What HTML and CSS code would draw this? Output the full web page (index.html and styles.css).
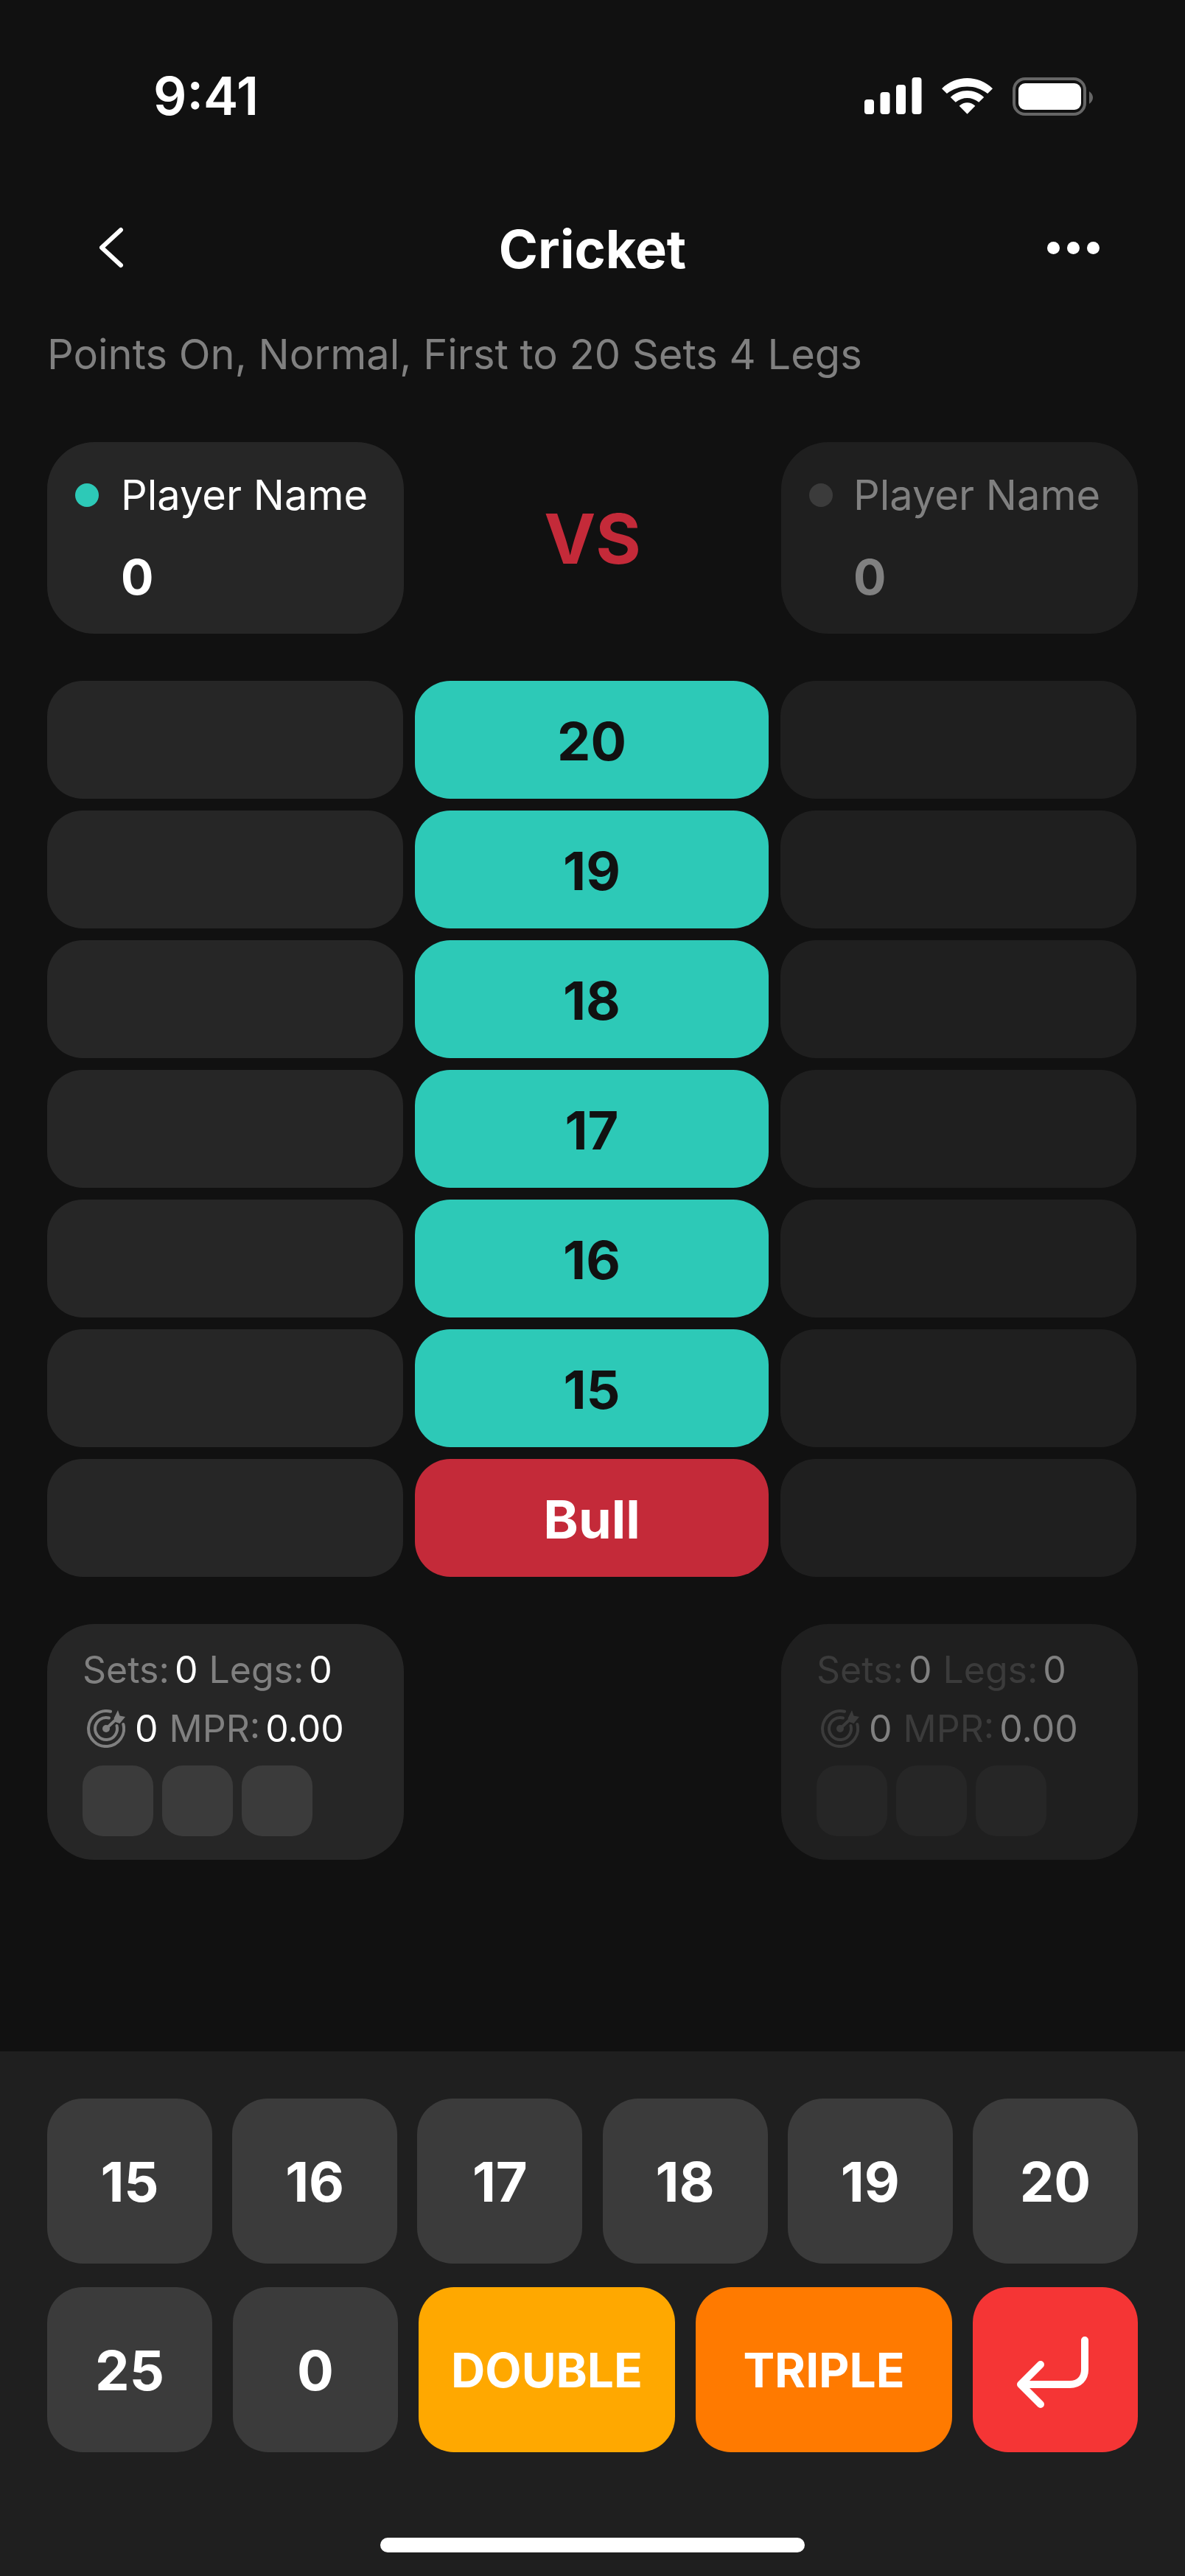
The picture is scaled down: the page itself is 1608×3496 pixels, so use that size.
FILE: index.html
```html
<!DOCTYPE html>
<html lang="en">
<head>
    <meta charset="UTF-8">
    <meta name="viewport" content="width=device-width, initial-scale=1.0">
    <title>Cricket</title>
    <link rel="stylesheet" href="styles.css">
</head>
<body>
    <div class="screen">
        <div class="status-bar">
            <span class="time">9:41</span>
            <div class="status-icons">
                <svg width="78" height="50" viewBox="0 0 78 50"><rect x="0" y="30" width="13" height="20" rx="4"/><rect x="21.5" y="20" width="13" height="30" rx="4"/><rect x="43" y="10" width="13" height="40" rx="4"/><rect x="64.5" y="0" width="13" height="50" rx="4"/></svg>
                <svg width="69" height="50" viewBox="0 0 70 50"><path d="M0 15 C20 -4 50 -4 70 15 L63 22 C47 9 23 9 7 22Z"/><path d="M12 27 C25 15 45 15 58 27 L51 34 C41 26 29 26 19 34Z"/><path d="M24 39 C31 33 39 33 46 39 L35 50Z"/></svg>
                <svg width="109" height="52" viewBox="0 0 109 52"><rect x="2" y="2" width="96" height="48" rx="15" fill="none" stroke="#666" stroke-width="4"/><rect x="8" y="8" width="85" height="36" rx="9"/><path d="M104 19 C107 21 109 24 109 27.5 C109 31 107 34 104 36Z" fill="#666"/></svg>
            </div>
        </div>

        <div class="nav">
            <svg class="back" width="36" height="56" viewBox="0 0 36 56"><path d="M32 4 L6 28 L32 52" fill="none" stroke="#fff" stroke-width="6" stroke-linecap="round" stroke-linejoin="round"/></svg>
            <h1>Cricket</h1>
            <div class="more"><span></span><span></span><span></span></div>
        </div>
        <p class="subtitle">Points On, Normal, First to 20 Sets 4 Legs</p>

        <div class="players">
            <div class="player">
                <div class="player-name"><span class="dot"></span>Player Name</div>
                <div class="player-score">0</div>
            </div>
            <div class="vs">VS</div>
            <div class="player inactive">
                <div class="player-name"><span class="dot"></span>Player Name</div>
                <div class="player-score">0</div>
            </div>
        </div>

        <div class="board">
            <div class="cell"></div><div class="target">20</div><div class="cell dim"></div>
            <div class="cell"></div><div class="target">19</div><div class="cell dim"></div>
            <div class="cell"></div><div class="target">18</div><div class="cell dim"></div>
            <div class="cell"></div><div class="target">17</div><div class="cell dim"></div>
            <div class="cell"></div><div class="target">16</div><div class="cell dim"></div>
            <div class="cell"></div><div class="target">15</div><div class="cell dim"></div>
            <div class="cell"></div><div class="target bull">Bull</div><div class="cell dim"></div>
        </div>

        <div class="stats-row">
            <div class="stats">
                <div class="stat-line"><span class="label">Sets:</span><span>0</span><span class="label">Legs:</span><span>0</span></div>
                <div class="stat-line">
                    <svg class="dart" width="52" height="52" viewBox="0 0 52 52"><g fill="none" stroke="currentColor" stroke-width="4" stroke-linecap="round"><path d="M32 2.8 A24 24 0 1 0 49.3 20"/><path d="M30 11.5 A15 15 0 1 0 40.5 22"/><path d="M26 26 L40 13"/></g><circle cx="26" cy="26" r="5" fill="currentColor"/><path d="M36.5 12 L42 1 L44.5 8.5 L52 10 L44.5 19 L38.5 17Z" fill="currentColor"/></svg>
                    <span>0</span><span class="label">MPR:</span><span>0.00</span>
                </div>
                <div class="throws"><div></div><div></div><div></div></div>
            </div>
            <div class="stats inactive">
                <div class="stat-line"><span class="label">Sets:</span><span>0</span><span class="label">Legs:</span><span>0</span></div>
                <div class="stat-line">
                    <svg class="dart" width="52" height="52" viewBox="0 0 52 52"><g fill="none" stroke="currentColor" stroke-width="4" stroke-linecap="round"><path d="M32 2.8 A24 24 0 1 0 49.3 20"/><path d="M30 11.5 A15 15 0 1 0 40.5 22"/><path d="M26 26 L40 13"/></g><circle cx="26" cy="26" r="5" fill="currentColor"/><path d="M36.5 12 L42 1 L44.5 8.5 L52 10 L44.5 19 L38.5 17Z" fill="currentColor"/></svg>
                    <span>0</span><span class="label">MPR:</span><span>0.00</span>
                </div>
                <div class="throws"><div></div><div></div><div></div></div>
            </div>
        </div>

        <div class="keypad">
            <div class="keys">
                <div class="key">15</div><div class="key">16</div><div class="key">17</div>
                <div class="key">18</div><div class="key">19</div><div class="key">20</div>
            </div>
            <div class="keys">
                <div class="key">25</div><div class="key">0</div>
                <div class="key wide double">DOUBLE</div>
                <div class="key wide triple">TRIPLE</div>
                <div class="key enter">
                    <svg width="224" height="224" viewBox="0 0 224 224"><path d="M152 72 V112 C152 124 144 132 132 132 H65 M92 105 L65 132 L92 159" fill="none" stroke="#fff" stroke-width="10" stroke-linecap="round" stroke-linejoin="round"/></svg>
                </div>
            </div>
            <div class="home-bar"></div>
        </div>
    </div>
</body>
</html>
```

FILE: styles.css
```css
* {
    box-sizing: border-box;
}
body {
    margin: 0;
    background-color: #111111;
    font-family: Inter, "Liberation Sans", sans-serif;
    color: #fff;
}
.screen {
    width: 1608px;
    height: 3496px;
    display: flex;
    flex-direction: column;
    overflow: hidden;
}

/* status bar */
.status-bar {
    height: 260px;
    flex: none;
    padding: 92px 125px 0 208px;
    display: flex;
    justify-content: space-between;
    align-items: flex-start;
}
.time {
    font-size: 71px;
    line-height: 76px;
    font-weight: 600;
}
.status-icons {
    display: flex;
    align-items: flex-start;
    gap: 27px;
    padding-top: 13px;
    fill: #fff;
}

/* header */
.nav {
    height: 155px;
    flex: none;
    padding: 0 116px 0 132px;
    display: flex;
    align-items: flex-start;
    justify-content: space-between;
    position: relative;
}
.back {
    margin-top: 48px;
}
.nav h1 {
    position: absolute;
    left: 0;
    right: 0;
    top: 36px;
    margin: 0;
    text-align: center;
    font-size: 72px;
    line-height: 84px;
    font-weight: 700;
}
.more {
    display: flex;
    gap: 10px;
    margin-top: 68px;
}
.more span {
    width: 17px;
    height: 17px;
    border-radius: 50%;
    background-color: #fff;
}
.subtitle {
    margin: 0;
    padding: 33px 0 0 64px;
    height: 185px;
    font-size: 56px;
    line-height: 66px;
    color: #808080;
    flex: none;
}

/* players */
.players {
    display: grid;
    grid-template-columns: 484px 1fr 484px;
    padding: 0 64px;
    flex: none;
}
.player {
    height: 260px;
    background-color: #262626;
    border-radius: 64px;
    padding: 40px 0 0 38px;
}
.player-name {
    display: flex;
    align-items: center;
    font-size: 56px;
    line-height: 64px;
    color: #fff;
}
.dot {
    width: 32px;
    height: 32px;
    border-radius: 50%;
    margin-right: 30px;
    background-color: #2dc9b7;
}
.player-score {
    padding-left: 62px;
    margin-top: 47px;
    font-size: 66px;
    line-height: 64px;
    font-weight: 700;
}
.player.inactive {
    background-color: #1f1f1f;
}
.player.inactive .player-name,
.player.inactive .player-score {
    color: #808080;
}
.player.inactive .dot {
    background-color: #3b3b3b;
    margin-right: 28px;
}
.player.inactive .player-score {
    padding-left: 60px;
}
.vs {
    text-align: center;
    align-self: center;
    padding-top: 2px;
    font-size: 94px;
    line-height: 120px;
    font-weight: 700;
    color: #c42a39;
}

/* scoreboard */
.board {
    display: grid;
    grid-template-columns: 483px 480px 483px;
    grid-auto-rows: 160px;
    gap: 16px;
    padding: 64px 64px 0;
    flex: none;
}
.cell {
    background-color: #262626;
    border-radius: 48px;
}
.cell.dim {
    background-color: #1f1f1f;
}
.target {
    display: flex;
    align-items: center;
    justify-content: center;
    padding-top: 2px;
    background-color: #2dc9b7;
    border-radius: 48px;
    font-size: 72px;
    font-weight: 700;
    color: #111111;
}
.target.bull {
    background-color: #c42a39;
    color: #fff;
}

/* stats */
.stats-row {
    display: flex;
    justify-content: space-between;
    padding: 64px 64px 0;
    flex: none;
}
.stats {
    width: 484px;
    height: 320px;
    background-color: #262626;
    border-radius: 64px;
    padding: 22px 48px 0;
    font-size: 50px;
}
.stat-line {
    height: 80px;
    display: flex;
    align-items: center;
    gap: 15px;
    color: #fff;
}
.label {
    color: #808080;
    margin-right: -8px;
}
.dart {
    color: #808080;
    margin: 0 -2px 0 6px;
}
.throws {
    display: flex;
    gap: 12px;
    margin-top: 10px;
}
.throws div {
    width: 96px;
    height: 96px;
    border-radius: 28px;
    background-color: #3b3b3b;
}
.stats.inactive {
    background-color: #1f1f1f;
}
.stats.inactive .stat-line {
    color: #808080;
}
.stats.inactive .label,
.stats.inactive .dart {
    color: #3b3b3b;
}
.stats.inactive .throws div {
    background-color: #262626;
}

/* keypad */
.keypad {
    margin-top: auto;
    height: 712px;
    flex: none;
    background-color: #1f1f1f;
    padding: 64px 64px 0;
    display: flex;
    flex-direction: column;
    gap: 32px;
}
.keys {
    display: flex;
    justify-content: space-between;
}
.key {
    flex: 0 0 224px;
    height: 224px;
    display: flex;
    align-items: center;
    justify-content: center;
    padding-top: 2px;
    background-color: #3b3b3b;
    border-radius: 48px;
    font-size: 74px;
    font-weight: 700;
}
.key.wide {
    flex-basis: 348px;
    padding-top: 0;
    font-size: 64px;
}
.key.double {
    background-color: #ffa800;
}
.key.triple {
    background-color: #ff7a00;
}
.key.enter {
    padding-top: 0;
    background-color: #f53535;
}
.home-bar {
    width: 576px;
    height: 20px;
    border-radius: 10px;
    background-color: #fff;
    margin: 84px auto 0;
}
```
